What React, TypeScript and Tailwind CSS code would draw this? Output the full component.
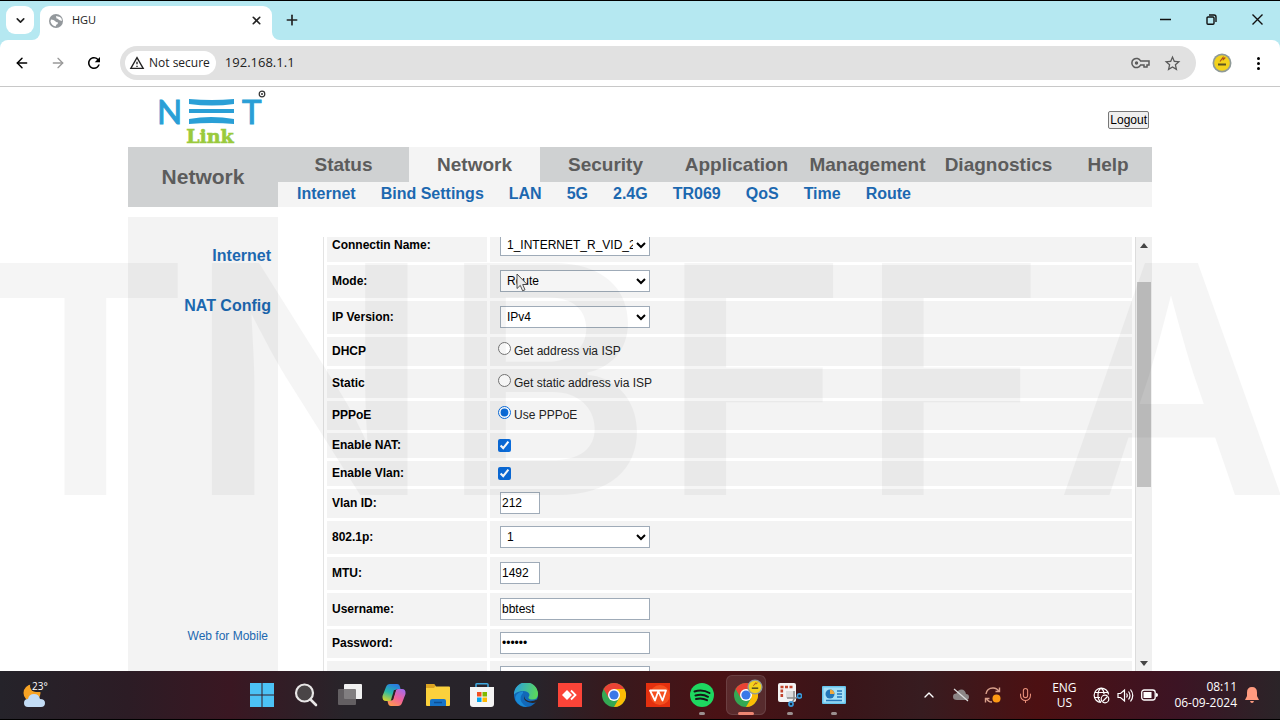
import type { ReactNode } from "react"
import { ArrowLeft, ArrowRight, ChevronDown, ChevronUp, Mic, Plus, X } from "lucide-react"
import { MdOutlineWarningAmber, MdRefresh, MdStarOutline } from "react-icons/md"

interface NavItem {
    label: string,
    active?: boolean,
}

interface FieldProps {
    label: string,
    id: string,
    size: "lg" | "md" | "sm",
    children?: ReactNode,
}

const mainTabs: NavItem[] = [
    { label: "Status" },
    { label: "Network", active: true },
    { label: "Security" },
    { label: "Application" },
    { label: "Management" },
    { label: "Diagnostics" },
]

const subTabs = ["Internet", "Bind Settings", "LAN", "5G", "2.4G", "TR069", "QoS", "Time", "Route"]

const watermark = ["T", "N", "B", "F", "F", "A"]

const rowHeights = {
    lg: "h-[33px]",
    md: "h-[29px]",
    sm: "h-[25px]",
}

const selectClass = "w-[150px] h-[22px] bg-white border border-[#9fabb8] ps-[2px] text-xs text-black"
const inputClass = "h-[22px] bg-white border border-[#9fabb8] px-[1px] text-xs text-black outline-none"

const Field = ({ label, id, size, children }: FieldProps) => (
    <div className={`flex gap-[3px] shrink-0 ${rowHeights[size]}`}>
        <div className="w-40 shrink-0 bg-[#f3f3f3] flex items-center ps-[5px] pb-[2px]">
            <label htmlFor={id} className="text-xs font-bold text-black">{label}</label>
        </div>
        <div className="relative grow bg-[#f3f3f3] flex items-center ps-[10px] pb-[2px]">{children}</div>
    </div>
)

const RadioOption = ({ id, text, checked }: { id: string, text: string, checked?: boolean }) => (
    <div className="flex items-center gap-[3px] -ms-[2px]">
        <input type="radio" name="wanType" id={id} defaultChecked={checked} className="size-[13px] mb-1 accent-[#0b6cda]" />
        <label htmlFor={id} className="text-xs text-[#222]">{text}</label>
    </div>
)

const Pointer = () => (
    <svg className="absolute left-[26px] top-[8px] w-3 h-[19px] pointer-events-none" viewBox="0 0 12 19">
        <path d="M1 1v14.5l3.3-3.1 2.3 5.4 2.4-1-2.3-5.3h4.5z" fill="#f5f5f5" stroke="#444" strokeWidth="0.9" />
    </svg>
)

const Logo = () => (
    <svg className="w-[114px] h-[58px]" viewBox="-4 0 114 58" role="img" aria-label="Netlink">
        <g fontFamily="Lato, sans-serif" fontSize="33" fill="#2a9fd6" stroke="#2a9fd6" strokeWidth="1">
            <text x="-2" y="36">N</text>
            <text x="83" y="36">T</text>
        </g>
        <path d="M30 11q23 2 45 0v5q-22 3-45 0zM30 21h45v4H30zM30 31q22-4 45 0v5q-22-2-45 0z" fill="#2a9fd6" />
        <circle cx="103" cy="6" r="2.800" fill="none" stroke="#333" strokeWidth="1.200" />
        <circle cx="103" cy="6" r="1" fill="#333" />
        <text x="51" y="55" textAnchor="middle" fontFamily="DejaVu Serif, serif" fontSize="19" fontWeight="700" fill="#9aca3c" stroke="#9aca3c" strokeWidth="0.600">Link</text>
    </svg>
)

const Badge = ({ className }: { className: string }) => (
    <svg className={className} viewBox="0 0 20 20">
        <circle cx="10" cy="10" r="9.5" fill="#8f9a98" />
        <circle cx="10" cy="10" r="7.8" fill="#f3d21c" />
        <path d="M8 8.500l3-4 .3 2 2-2" fill="none" stroke="#b0501c" strokeWidth="1.200" />
        <path d="M6 11.500h8" stroke="#5d5520" strokeWidth="2" />
    </svg>
)

const BrowserChrome = () => (
    <div className="bg-[#b5e8f1] border-t border-black shrink-0 font-['Open_Sans',sans-serif] text-[#222]">
        <div className="flex h-[39px]">
            <button aria-label="Search tabs" className="bg-white size-7 rounded-[9px] ms-[6px] mt-[5px] flex items-center justify-center">
                <ChevronDown size={13} strokeWidth={3} />
            </button>
            <div className="relative ms-[6px] mt-[5px] w-[232px] bg-white rounded-t-[9px] flex items-center px-[9px] pb-[5px] before:absolute before:-left-2 before:bottom-0 before:size-2 before:rounded-br-lg before:shadow-[4px_4px_0_4px_white] after:absolute after:-right-2 after:bottom-0 after:size-2 after:rounded-bl-lg after:shadow-[-4px_4px_0_4px_white]">
                <svg className="size-[14px]" viewBox="0 0 14 14">
                    <circle cx="7" cy="7" r="7" fill="#93989c" />
                    <path d="M2 5.500q3 0 4 1.500t2.500 1q1 2-1 2.500l-1 2q-4-1-5-5zM7 2l4 1q2 1 2 4l-3-1q-1-2-2.500-1.500z" fill="#fff" />
                </svg>
                <span className="text-[11px] ms-[9px]">HGU</span>
                <button aria-label="Close tab" className="ms-auto"><X size={13} strokeWidth={3} /></button>
            </div>
            <button aria-label="New tab" className="ms-[12px] mb-[2px]"><Plus size={16} strokeWidth={2.5} /></button>
            <div className="ms-auto flex pb-[2px]">
                <button aria-label="Minimize" className="w-[46px] flex items-center justify-center">
                    <svg className="size-[11px]" viewBox="0 0 11 11"><path d="M0 5.500h11" stroke="#111" strokeWidth="1.500" /></svg>
                </button>
                <button aria-label="Restore" className="w-[46px] flex items-center justify-center">
                    <svg className="size-[11px]" viewBox="0 0 11 11" fill="none" stroke="#111" strokeWidth="1.400">
                        <rect x="1" y="3" width="7" height="7.300" rx="1" />
                        <path d="M3 1h5q2 0 2 2v5" />
                    </svg>
                </button>
                <button aria-label="Close" className="w-[46px] flex items-center justify-center">
                    <svg className="size-[11px]" viewBox="0 0 11 11"><path d="M.5.500l10 10M10.500.500l-10 10" stroke="#111" strokeWidth="1.400" /></svg>
                </button>
            </div>
        </div>
        <div className="relative bg-white rounded-t-lg h-[47px] border-b border-[#c8c8c8] flex items-center ps-[14px] pe-[14px]">
            <button aria-label="Back" className="text-black"><ArrowLeft size={16} strokeWidth={2.2} /></button>
            <button aria-label="Forward" className="text-[#999] ms-5"><ArrowRight size={16} strokeWidth={2} /></button>
            <button aria-label="Reload" className="text-black ms-[19px]"><MdRefresh size={18} /></button>
            <div className="grow h-[34px] bg-[#e1e1e1] rounded-full ms-[17px] flex items-center ps-[5px] pe-[14px]">
                <button className="h-6 bg-white rounded-full flex items-center gap-1 ps-[4px] pe-[6px] text-xs font-medium text-[#222]">
                    <MdOutlineWarningAmber size={16} />Not secure
                </button>
                <input aria-label="Address" defaultValue="192.168.1.1" className="grow ms-[9px] bg-transparent outline-none text-[13px]" />
                <svg className="w-[19px] h-3" viewBox="0 0 19 12" fill="none" stroke="#5a5a5a" strokeWidth="1.500">
                    <path d="M9.600 4a4.600 4.600 0 1 0 0 4H13v2h3V8h2V4z" />
                    <circle cx="5.500" cy="6" r="1.700" fill="#5a5a5a" stroke="none" />
                </svg>
                <MdStarOutline size={19} className="ms-[13px] text-[#5a5a5a]" />
            </div>
            <Badge className="size-5 ms-4" />
            <button aria-label="Menu" className="ms-[18px] flex flex-col gap-[2px] w-4 items-center">
                <span className="size-[3px] rounded-full bg-black" />
                <span className="size-[3px] rounded-full bg-black" />
                <span className="size-[3px] rounded-full bg-black" />
            </button>
        </div>
    </div>
)

const TopNav = () => (
    <div className="flex h-[60px] shrink-0">
        <div className="w-[150px] shrink-0 bg-[#cfd1d2] flex items-center justify-center text-[21px] font-bold text-[#5c5c5c]">Network</div>
        <div className="grow bg-[#f4f4f4]">
            <nav className="flex h-[35px] bg-[#cfd1d2] text-[19px] font-bold text-[#5c5c5c]">
                { mainTabs.map((tab) => (
                    <a key={tab.label} href="#" className={`w-[131px] pt-[2px] flex items-center justify-center ${tab.active ? "bg-[#f4f4f4]" : ""}`}>{tab.label}</a>
                ))}
                <a href="#" className="grow pt-[2px] flex items-center justify-center">Help</a>
            </nav>
            <nav className="flex items-center h-6 gap-[25px] ps-[19px] font-bold text-[#1c68b0]">
                { subTabs.map((tab) => <a key={tab} href="#">{tab}</a>)}
            </nav>
        </div>
    </div>
)

const Scrollbar = () => (
    <div className="w-[17px] shrink-0 bg-[#f0f0f0] border-s border-[#dcdcdc] flex flex-col items-center">
        <svg className="w-2 h-[5px] mt-[6px] shrink-0" viewBox="0 0 8 5"><path d="M0 5l4-5 4 5z" fill="#444" /></svg>
        <div className="w-[14px] h-[205px] mt-[34px] bg-[#c1c1c1] shrink-0" />
        <svg className="w-2 h-[5px] mt-auto mb-[5px] shrink-0" viewBox="0 0 8 5"><path d="M0 0l4 5 4-5z" fill="#444" /></svg>
    </div>
)

const WanForm = () => (
    <div className="grow ms-[45px] mt-5 flex overflow-hidden border-s border-[#e3e3e3]">
        <form className="grow flex flex-col gap-[3px] ps-[3px] pe-[3px] -mt-2">
            <Field label="Connectin Name:" id="connection" size="lg">
                <select id="connection" className={selectClass}>
                    <option>1_INTERNET_R_VID_212</option>
                </select>
            </Field>
            <Field label="Mode:" id="mode" size="lg">
                <select id="mode" className={selectClass}>
                    <option>Route</option>
                    <option>Bridge</option>
                </select>
                <Pointer />
            </Field>
            <Field label="IP Version:" id="ipVersion" size="lg">
                <select id="ipVersion" className={selectClass}>
                    <option>IPv4</option>
                    <option>IPv6</option>
                </select>
            </Field>
            <Field label="DHCP" id="dhcp" size="md"><RadioOption id="dhcp" text="Get address via ISP" /></Field>
            <Field label="Static" id="static" size="md"><RadioOption id="static" text="Get static address via ISP" /></Field>
            <Field label="PPPoE" id="pppoe" size="md"><RadioOption id="pppoe" text="Use PPPoE" checked /></Field>
            <Field label="Enable NAT:" id="nat" size="sm">
                <input type="checkbox" id="nat" defaultChecked className="size-[13px] -ms-[2px] mt-[2px] accent-[#0b6cda]" />
            </Field>
            <Field label="Enable Vlan:" id="vlan" size="sm">
                <input type="checkbox" id="vlan" defaultChecked className="size-[13px] -ms-[2px] mt-[2px] accent-[#0b6cda]" />
            </Field>
            <Field label="Vlan ID:" id="vlanId" size="md">
                <input type="text" id="vlanId" defaultValue="212" className={`w-10 ${inputClass}`} />
            </Field>
            <Field label="802.1p:" id="priority" size="lg">
                <select id="priority" className={selectClass}>
                    <option>1</option>
                    <option>2</option>
                </select>
            </Field>
            <Field label="MTU:" id="mtu" size="lg">
                <input type="text" id="mtu" defaultValue="1492" className={`w-10 ${inputClass}`} />
            </Field>
            <Field label="Username:" id="username" size="lg">
                <input type="text" id="username" defaultValue="bbtest" className={`w-[150px] ${inputClass}`} />
            </Field>
            <Field label="Password:" id="password" size="md">
                <input type="password" id="password" defaultValue="bbtest" className={`w-[150px] ${inputClass}`} />
            </Field>
            <Field label="" id="service" size="lg">
                <input type="text" id="service" aria-label="Service name" className={`w-[150px] ${inputClass}`} />
            </Field>
        </form>
        <Scrollbar />
    </div>
)

const RouterPage = () => (
    <div className="relative grow min-h-0 overflow-hidden bg-white font-['Liberation_Sans',Arial,sans-serif]">
        <div className="max-w-[1024px] h-full mx-auto flex flex-col">
            <header className="h-[60px] shrink-0 flex items-center justify-between ps-[27px] pe-[3px]">
                <Logo />
                <button className="h-[18px] mt-[5px] px-[1px] text-xs bg-[#efefef] border border-[#777] rounded-xs text-black">Logout</button>
            </header>
            <TopNav />
            <div className="grow min-h-0 flex mt-[10px]">
                <aside className="w-[150px] shrink-0 bg-[#f3f3f3] flex flex-col items-end pt-[27px] pe-[7px] pb-[27px] text-[#1c68b0]">
                    <a href="#" className="font-bold">Internet</a>
                    <a href="#" className="font-bold mt-[26px]">NAT Config</a>
                    <a href="#" className="text-xs mt-auto me-[3px]">Web for Mobile</a>
                </aside>
                <WanForm />
            </div>
        </div>
        <div className="absolute -left-5 top-[134px] flex gap-[10px] pointer-events-none select-none font-['Inter',sans-serif] font-semibold text-[319px] leading-[316px] text-black opacity-[0.035]" aria-hidden="true">
            { watermark.map((letter, index) => <span key={index} className="first:-me-3">{letter}</span>)}
        </div>
    </div>
)

const ChromeIcon = () => (
    <svg className="size-6" viewBox="0 0 24 24">
        <circle cx="12" cy="12" r="12" fill="#34a853" />
        <path d="M12 12L1.600 6A12 12 0 0 1 22.400 6z" fill="#ea4335" />
        <path d="M12 6h10.400A12 12 0 0 1 12 24l5.200-9z" fill="#fbbc05" />
        <path d="M1.600 6l5.200 9L12 6z" fill="#ea4335" />
        <circle cx="12" cy="12" r="6" fill="#fff" />
        <circle cx="12" cy="12" r="4.600" fill="#3b78e7" />
    </svg>
)

const StartIcon = () => (
    <svg className="size-6" viewBox="0 0 24 24">
        <path d="M0 0h11.500v11.500H0zM12.500 0H24v11.500H12.500zM0 12.500h11.500V24H0zM12.500 12.500H24V24H12.500z" fill="#4cc2f5" />
    </svg>
)

const SearchIcon = () => (
    <svg className="size-6" viewBox="0 0 24 24">
        <circle cx="10.500" cy="10" r="8.500" fill="#4a4547" stroke="#e8e6e6" strokeWidth="2.200" />
        <path d="M16.500 16.500l5.500 5.500" stroke="#e8e6e6" strokeWidth="2.600" strokeLinecap="round" />
    </svg>
)

const TaskViewIcon = () => (
    <svg className="size-6" viewBox="0 0 24 24">
        <rect x="6" y="1" width="18" height="15" rx="1" fill="#f0f0f0" />
        <rect x="0" y="6" width="18" height="16" rx="1" fill="#6d6a6c" fillOpacity="0.850" />
    </svg>
)

const CopilotIcon = () => (
    <svg className="size-6" viewBox="0 0 24 24">
        <defs>
            <linearGradient id="cpLeft" x1="0.600" y1="0" x2="0.200" y2="1">
                <stop offset="0" stopColor="#2a7de1" /><stop offset="0.500" stopColor="#27b8a8" /><stop offset="1" stopColor="#d7d32b" />
            </linearGradient>
            <linearGradient id="cpRight" x1="0.800" y1="0" x2="0.200" y2="1">
                <stop offset="0" stopColor="#a56be8" /><stop offset="0.500" stopColor="#f0619b" /><stop offset="1" stopColor="#ff9a4d" />
            </linearGradient>
        </defs>
        <path d="M8 1h7q2.500 0 3 3l.5 2h-3q-2 0-2.600 2l-2.400 8q-.6 2-2.500 2H4q-4 0-3.500-5L4 4q1-3 4-3z" fill="url(#cpLeft)" />
        <path d="M16 23H9q-2.500 0-3-3l-.5-2h3q2 0 2.600-2l2.400-8q.6-2 2.500-2h4q4 0 3.500 5L20 20q-1 3-4 3z" fill="url(#cpRight)" />
        <path d="M14 7h-2l-3 10h2z" fill="#2b2024" />
    </svg>
)

const FolderIcon = () => (
    <svg className="size-6" viewBox="0 0 24 24">
        <path d="M0 2q0-1 1-1h7l2 2.500h13q1 0 1 1V22q0 1-1 1H1q-1 0-1-1z" fill="#fbd13c" />
        <path d="M0 2q0-1 1-1h7l1.500 2L8 5H0z" fill="#dca422" />
        <path d="M4 23v-5q0-2 2-2h12q2 0 2 2v5z" fill="#1673c8" />
        <path d="M8 19.500h8" stroke="#0c4f95" strokeWidth="1.500" />
    </svg>
)

const StoreIcon = () => (
    <svg className="size-6" viewBox="0 0 24 24">
        <path d="M6 5V1.500Q6 .8 7 .8h10q1 0 1 .8V5" fill="none" stroke="#3fa9e0" strokeWidth="1.500" />
        <path d="M0 4h24v17q0 3-3 3H3q-3 0-3-3z" fill="#f4f4f4" />
        <path d="M7 9h4.500v4.500H7z" fill="#f25022" /><path d="M12.500 9H17v4.500h-4.500z" fill="#7fba00" />
        <path d="M7 14.500h4.500V19H7z" fill="#00a4ef" /><path d="M12.500 14.500H17V19h-4.500z" fill="#ffb900" />
    </svg>
)

const EdgeIcon = () => (
    <svg className="size-6" viewBox="0 0 24 24">
        <defs>
            <linearGradient id="edgeTop" x1="0" y1="0.300" x2="1" y2="0.500">
                <stop offset="0" stopColor="#2a9fe0" /><stop offset="1" stopColor="#5bd85a" />
            </linearGradient>
        </defs>
        <circle cx="12" cy="12" r="12" fill="#1268b8" />
        <path d="M0 11.500A12 12 0 0 1 24 11q0 5.500-5.500 5.500-4.500 0-4-2.500 1.500-1.500.5-3.500Q13.500 8 9.500 8 3 8 0 11.500z" fill="url(#edgeTop)" />
        <path d="M9 10q-4 4-1.500 9 2 3.500 5.500 5Q5 24 1.500 17 0 10 9 8.500z" fill="#1a8ad6" />
        <path d="M10.500 12q-1 4.500 4 6 4 1 8.500-1.500l1-.5-1.500 3q-3 1.500-7 .5-5-1.500-5.500-4.500z" fill="#2a2427" />
    </svg>
)

const AnyDeskIcon = () => (
    <svg className="size-6" viewBox="0 0 24 24">
        <path d="M0 0h24v24H0z" fill="#fb4438" />
        <path d="M9 7l5 5-5 5-5-5z" fill="#fff" />
        <path d="M13 7.500l4.500 4.500-4.500 4.500" fill="none" stroke="#fff" strokeWidth="1.800" />
    </svg>
)

const WpsIcon = () => (
    <svg className="size-6" viewBox="0 0 24 24">
        <path d="M0 0h24v24H0z" fill="#e4300f" />
        <circle cx="14" cy="12" r="10" fill="#f5501f" />
        <path d="M4 7.500h8.500L9 17.500zM12 7.500h8l-3.500 10z" fill="none" stroke="#fff" strokeWidth="1.800" strokeLinejoin="round" />
    </svg>
)

const SpotifyIcon = () => (
    <svg className="size-6" viewBox="0 0 24 24">
        <circle cx="12" cy="12" r="12" fill="#1ed760" />
        <path d="M4.500 8.500q8-2.500 15 1.500M5.500 12.500q7-2 12.500 1.300M6 16q6-1.500 11 1.200" fill="none" stroke="#161616" strokeWidth="2" strokeLinecap="round" />
    </svg>
)

const SnipIcon = () => (
    <svg className="size-6" viewBox="0 0 24 24">
        <rect x="0" y="0" width="18" height="19" rx="2" fill="#f3f3f3" />
        <path d="M2.500 4h12M3.800 6.500v9" fill="none" stroke="#c2442d" strokeWidth="2.600" strokeDasharray="3 1.500" />
        <path d="M8 8h7v7H8z" fill="#dcdcdc" />
        <path d="M16 8v8l-2 4M9 15h9l2-1" fill="none" stroke="#8a8a8a" strokeWidth="1.600" />
        <circle cx="13" cy="21" r="2.100" fill="#1d2a38" stroke="#3a9bdc" strokeWidth="1.600" />
        <circle cx="21.500" cy="13" r="2.100" fill="#1d2a38" stroke="#3a9bdc" strokeWidth="1.600" />
    </svg>
)

const ControlPanelIcon = () => (
    <svg className="size-6" viewBox="0 0 24 24">
        <rect x="0" y="3" width="24" height="18" rx="1" fill="#66c5ee" />
        <rect x="1.500" y="4.500" width="21" height="15" fill="#a5e0f8" />
        <circle cx="8" cy="11" r="4.500" fill="#2476b8" />
        <path d="M8 11V6.500A4.500 4.500 0 0 1 12.500 11z" fill="#f0a83c" />
        <path d="M15 8h5M15 11h5M15 14h5M4 17.500h16" stroke="#2476b8" strokeWidth="1.300" />
    </svg>
)

const apps = [
    { name: "Start", icon: <StartIcon /> },
    { name: "Search", icon: <SearchIcon /> },
    { name: "Task View", icon: <TaskViewIcon /> },
    { name: "Copilot", icon: <CopilotIcon /> },
    { name: "File Explorer", icon: <FolderIcon /> },
    { name: "Microsoft Store", icon: <StoreIcon /> },
    { name: "Edge", icon: <EdgeIcon /> },
    { name: "AnyDesk", icon: <AnyDeskIcon /> },
    { name: "Chrome", icon: <ChromeIcon /> },
    { name: "WPS Office", icon: <WpsIcon /> },
    { name: "Spotify", icon: <SpotifyIcon />, running: true },
    { name: "Chrome profile", icon: <ChromeIcon />, active: true },
    { name: "Snipping Tool", icon: <SnipIcon />, running: true },
    { name: "Control Panel", icon: <ControlPanelIcon />, running: true },
]

const Taskbar = () => (
    <footer className="h-[49px] shrink-0 flex items-center border-b border-black text-white font-['Open_Sans',sans-serif] bg-[linear-gradient(90deg,#25232a_0%,#2c1c25_10%,#3a1722_18%,#28242a_27%,#28232a_42%,#38191d_48%,#4a1215_56%,#3a1519_66%,#371c20_72%,#4c1012_81%,#3c1424_92%,#2b2428_100%)]">
        <div className="w-60 shrink-0 ps-[22px]">
            <div className="relative w-7 h-7">
                <svg className="absolute left-0 top-[3px] w-6 h-6" viewBox="0 0 24 24">
                    <circle cx="10" cy="9" r="8.500" fill="#f7a324" />
                    <path d="M6 23q-4 0-4-4t4-4q1-5 6-5t6 5q5 0 5 4t-4 4z" fill="#c3dcf5" />
                </svg>
                <span className="absolute left-[8px] -top-[1px] rounded-md bg-[#25232a] px-[2px] text-[10px] leading-3">23°</span>
            </div>
        </div>
        <div className="flex">
            { apps.map((app) => (
                <button key={app.name} aria-label={app.name} className="relative w-11 h-12 flex items-center justify-center">
                    { app.active && <span className="absolute inset-x-[2px] inset-y-1 rounded-md bg-white/10 border border-white/10" /> }
                    <span className="relative">{app.icon}</span>
                    { app.active && <Badge className="absolute size-4 right-[5px] top-2" /> }
                    { app.active && <span className="absolute bottom-1 w-4 h-[3px] rounded-full bg-[#ee8572]" /> }
                    { app.running && <span className="absolute bottom-1 w-[6px] h-[3px] rounded-full bg-[#9b9090]" /> }
                </button>
            ))}
        </div>
        <div className="ms-auto flex items-center pe-[21px]">
            <button aria-label="Hidden icons" className="w-8 flex justify-center"><ChevronUp size={16} strokeWidth={2} /></button>
            <svg className="w-4 h-[14px] mx-2" viewBox="0 0 16 14">
                <path d="M4 12q-4 0-4-3.300T3.500 5.500Q5 1.500 8.500 1.500T13 6q3 0 3 3t-3 3z" fill="#8c8686" />
                <path d="M1 1l14 12" stroke="#ddd" strokeWidth="1.200" />
            </svg>
            <svg className="size-[18px] mx-[7px]" viewBox="0 0 18 18" fill="none" stroke="#d9a08c" strokeWidth="1.400">
                <path d="M2 8Q3 2 9 2q4 0 6 3.500M15.500 1.500v4h-4M1.500 16.500v-4h4M2.500 12.500Q4 16 8 16" />
                <circle cx="12.500" cy="12.500" r="4" fill="#ff9a14" stroke="none" />
            </svg>
            <Mic size={17} strokeWidth={1.5} className="mx-2 text-[#e9907a]" />
            <div className="w-[44px] text-center text-[12px] leading-[15px]">ENG<br />US</div>
            <svg className="size-[17px] ms-[7px]" viewBox="0 0 17 17" fill="none" stroke="#fff" strokeWidth="1.200">
                <path d="M8 15.500a7.200 7.200 0 1 1 7.500-8M8 15.500C3 11 5 3 8 1c2 1.500 3 4 3 6M1.500 5.500h13M1.500 10.500H7" />
                <circle cx="12" cy="12" r="3.800" />
                <path d="M9.500 14.500l5-5" />
            </svg>
            <svg className="size-[17px] ms-[7px]" viewBox="0 0 17 17" fill="none" stroke="#fff" strokeWidth="1.200">
                <path d="M1 6.500h2.500L7.500 3v11l-4-3.500H1zM9.500 6.500q1.500 2 0 4M11.500 4.500q3 4 0 8M13.500 2.500q4.500 6 0 12" />
            </svg>
            <svg className="w-[17px] h-3 ms-[7px]" viewBox="0 0 17 12">
                <rect x="0.700" y="1" width="13.500" height="10" rx="2.500" fill="none" stroke="#fff" strokeWidth="1.300" />
                <path d="M2.500 3h8v6h-8zM15 4q2 0 2 2t-2 2z" fill="#fff" />
            </svg>
            <div className="ms-4 text-right text-[12px] leading-4">08:11<br />06-09-2024</div>
            <svg className="w-[14px] h-4 ms-2" viewBox="0 0 14 16">
                <path d="M7 0q5 0 5 5.500V9l2 4H0l2-4V5.500Q2 0 7 0zM5 14h4q-.5 2-2 2t-2-2z" fill="#ff9b80" />
            </svg>
        </div>
    </footer>
)

const App = () => {
    return (
        <div className="h-screen flex flex-col overflow-hidden">
            <BrowserChrome />
            <RouterPage />
            <Taskbar />
        </div>
    )
}

export default App
